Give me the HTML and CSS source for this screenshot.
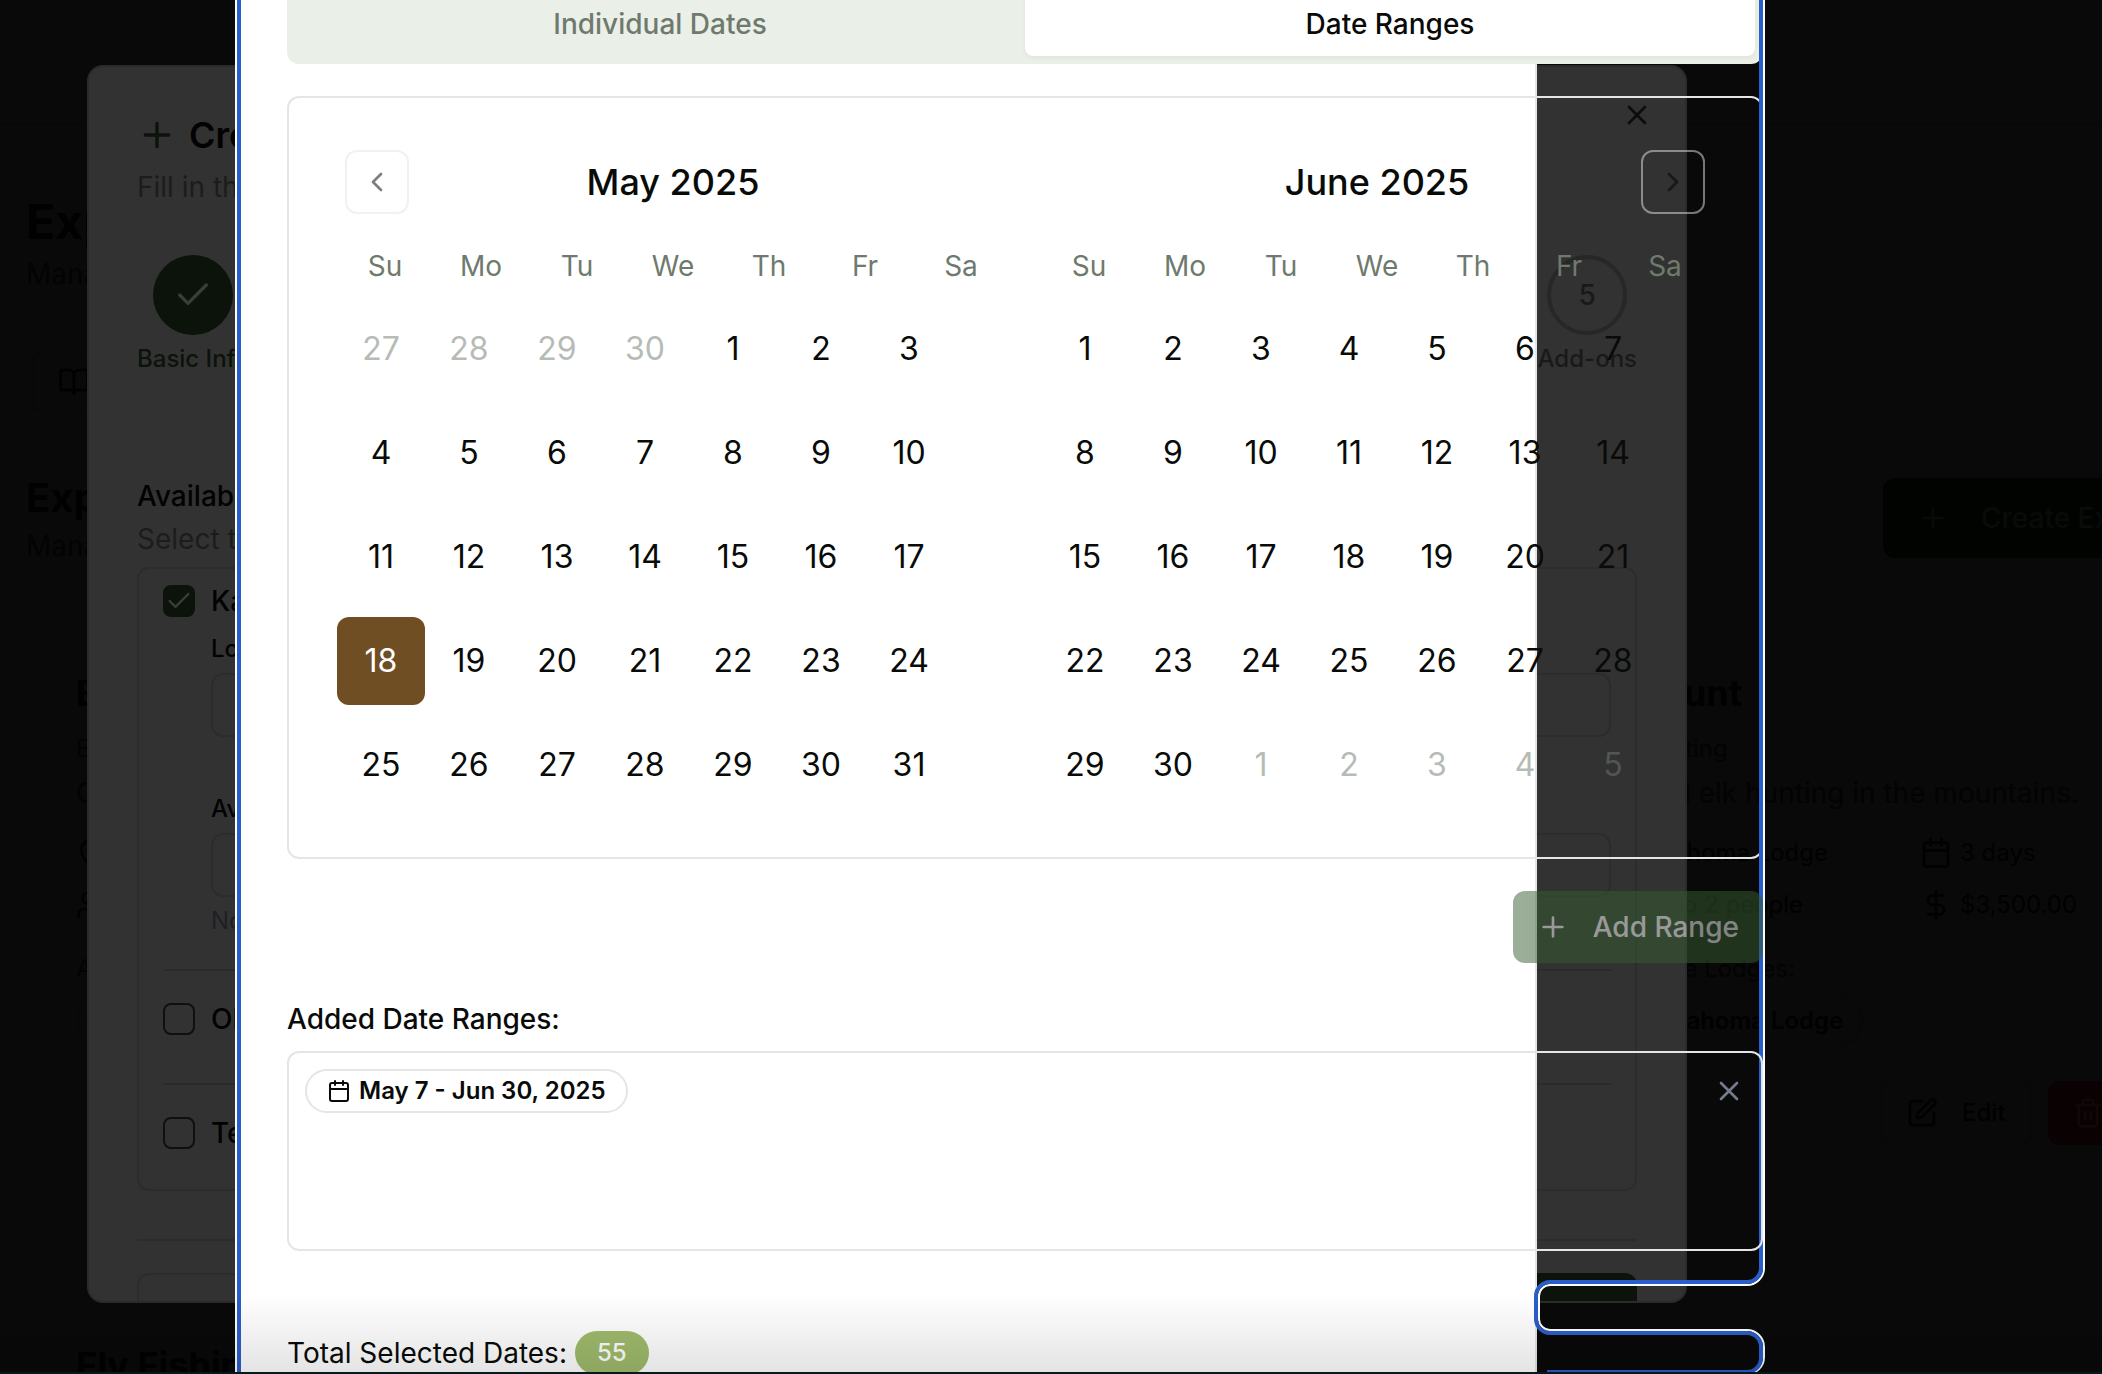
FILE: index.html
```html
<!DOCTYPE html>
<html lang="en">
<head>
<meta charset="utf-8">
<title>Experiences</title>
<link rel="stylesheet" href="styles.css">
</head>
<body>
<svg width="0" height="0" class="defs" aria-hidden="true">
  <symbol id="plus" viewBox="0 0 24 24"><path d="M5 12h14M12 5v14"/></symbol>
  <symbol id="x" viewBox="0 0 24 24"><path d="M18 6 6 18M6 6l12 12"/></symbol>
  <symbol id="check" viewBox="0 0 24 24"><path d="M20 6 9 17l-5-5"/></symbol>
  <symbol id="left" viewBox="0 0 24 24"><path d="m15 18-6-6 6-6"/></symbol>
  <symbol id="right" viewBox="0 0 24 24"><path d="m9 18 6-6-6-6"/></symbol>
  <symbol id="calendar" viewBox="0 0 24 24"><path d="M8 2v4M16 2v4M3 10h18"/><rect width="18" height="18" x="3" y="4" rx="2"/></symbol>
  <symbol id="book" viewBox="0 0 24 24"><path d="M12 7v14"/><path d="M3 18a1 1 0 0 1-1-1V4a1 1 0 0 1 1-1h5a4 4 0 0 1 4 4 4 4 0 0 1 4-4h5a1 1 0 0 1 1 1v13a1 1 0 0 1-1 1h-6a3 3 0 0 0-3 3 3 3 0 0 0-3-3z"/></symbol>
  <symbol id="pin" viewBox="0 0 24 24"><path d="M20 10c0 5-5.500 10.200-7.400 11.800a1 1 0 0 1-1.200 0C9.500 20.200 4 15 4 10a8 8 0 0 1 16 0"/><circle cx="12" cy="10" r="3"/></symbol>
  <symbol id="users" viewBox="0 0 24 24"><path d="M16 21v-2a4 4 0 0 0-4-4H6a4 4 0 0 0-4 4v2M22 21v-2a4 4 0 0 0-3-3.870M16 3.130a4 4 0 0 1 0 7.750"/><circle cx="9" cy="7" r="4"/></symbol>
  <symbol id="dollar" viewBox="0 0 24 24"><path d="M12 2v20M17 5H9.500a3.500 3.500 0 0 0 0 7h5a3.500 3.500 0 0 1 0 7H6"/></symbol>
  <symbol id="edit" viewBox="0 0 24 24"><path d="M12 3H5a2 2 0 0 0-2 2v14a2 2 0 0 0 2 2h14a2 2 0 0 0 2-2v-7"/><path d="M18.375 2.625a1 1 0 0 1 3 3l-9.013 9.014a2 2 0 0 1-.853.505l-2.873.84a.5.5 0 0 1-.620-.620l.840-2.873a2 2 0 0 1 .506-.852z"/></symbol>
  <symbol id="trash" viewBox="0 0 24 24"><path d="M3 6h18M19 6v14c0 1-1 2-2 2H7c-1 0-2-1-2-2V6M8 6V4c0-1 1-2 2-2h4c1 0 2 1 2 2v2M10 11v6M14 11v6"/></symbol>
</svg>

<div class="screen">
  <main class="page">
    <div class="topbar"></div>
    <header class="intro">
      <h1>Experiences</h1>
      <p>Manage</p>
    </header>
    <nav class="page-tabs"><button type="button" aria-label="Experiences"><svg class="icon"><use href="#book"/></svg></button></nav>
    <div class="section-head">
      <div>
        <h2>Experiences</h2>
        <p>Manage</p>
      </div>
      <button type="button" class="create"><svg class="icon"><use href="#plus"/></svg>Create Experience</button>
    </div>
    <div class="offers">
      <article class="offer">
        <h3>Elk</h3>
        <p class="kind">Big</p>
        <p class="about">Guided</p>
        <div class="meta">
          <span><svg class="icon"><use href="#pin"/></svg></span>
          <span></span>
          <span><svg class="icon"><use href="#users"/></svg></span>
        </div>
        <p class="kind lodges">Available</p>
        <span class="lodge">Lodge</span>
      </article>
      <article class="offer second">
        <h3>Elk Hunt</h3>
        <p class="kind">Big Hunting</p>
        <p class="about">Guided elk hunting in the mountains.</p>
        <div class="meta">
          <span><svg class="icon"><use href="#pin"/></svg>Oklahoma Lodge</span>
          <span><svg class="icon"><use href="#calendar"/></svg>3 days</span>
          <span><svg class="icon"><use href="#users"/></svg>Up to 2 people</span>
          <span><svg class="icon"><use href="#dollar"/></svg>$3,500.00</span>
        </div>
        <p class="kind lodges">Available Lodges:</p>
        <span class="lodge">Oklahoma Lodge</span>
        <div class="actions">
          <button type="button"><svg class="icon"><use href="#edit"/></svg>Edit</button>
          <button type="button" class="remove" aria-label="Delete"><svg class="icon"><use href="#trash"/></svg></button>
        </div>
      </article>
      <article class="offer"><h3>Fly Fishing</h3></article>
    </div>
  </main>

  <section class="dialog" role="dialog" aria-label="Create">
    <div class="dialog-head">
      <div>
        <h2><svg class="icon"><use href="#plus"/></svg>Create</h2>
        <p>Fill in the</p>
      </div>
      <button type="button" class="close" aria-label="Close"><svg class="icon"><use href="#x"/></svg></button>
    </div>
    <ol class="steps">
      <li class="done"><span class="dot"><svg class="icon"><use href="#check"/></svg></span>Basic Info</li>
      <li><span class="dot">5</span>Add-ons</li>
    </ol>
    <h3>Available</h3>
    <p>Select the</p>
    <div class="choices">
      <label class="choice"><input type="checkbox" checked>Ka</label>
      <div class="fields">
        <label for="lodge-name">Lodge</label>
        <input type="text" id="lodge-name">
        <label for="lodge-dates" class="spaced">Available</label>
        <input type="text" id="lodge-dates">
        <p>No</p>
      </div>
      <hr>
      <label class="choice"><input type="checkbox">Oklahoma</label>
      <hr class="late">
      <label class="choice"><input type="checkbox">Texas</label>
    </div>
    <hr class="foot-line">
    <footer>
      <button type="button" aria-label="Back"></button>
      <button type="button" class="next" aria-label="Next"></button>
    </footer>
  </section>

  <section class="popover" aria-label="Select dates">
    <div class="tabs" role="tablist">
      <button type="button" role="tab" aria-selected="false">Individual Dates</button>
      <button type="button" role="tab" aria-selected="true">Date Ranges</button>
    </div>
    <div class="calendar">
      <div class="month">
        <div class="caption">
          <button type="button" class="nav" aria-label="Previous month"><svg class="icon"><use href="#left"/></svg></button>
          <h4>May 2025</h4>
        </div>
        <table>
          <thead><tr><th>Su</th><th>Mo</th><th>Tu</th><th>We</th><th>Th</th><th>Fr</th><th>Sa</th></tr></thead>
          <tbody>
            <tr><td class="out"><button>27</button></td><td class="out"><button>28</button></td><td class="out"><button>29</button></td><td class="out"><button>30</button></td><td><button>1</button></td><td><button>2</button></td><td><button>3</button></td></tr>
            <tr><td><button>4</button></td><td><button>5</button></td><td><button>6</button></td><td><button>7</button></td><td><button>8</button></td><td><button>9</button></td><td><button>10</button></td></tr>
            <tr><td><button>11</button></td><td><button>12</button></td><td><button>13</button></td><td><button>14</button></td><td><button>15</button></td><td><button>16</button></td><td><button>17</button></td></tr>
            <tr><td class="today"><button>18</button></td><td><button>19</button></td><td><button>20</button></td><td><button>21</button></td><td><button>22</button></td><td><button>23</button></td><td><button>24</button></td></tr>
            <tr><td><button>25</button></td><td><button>26</button></td><td><button>27</button></td><td><button>28</button></td><td><button>29</button></td><td><button>30</button></td><td><button>31</button></td></tr>
          </tbody>
        </table>
      </div>
      <div class="month">
        <div class="caption">
          <h4>June 2025</h4>
          <button type="button" class="nav" aria-label="Next month"><svg class="icon"><use href="#right"/></svg></button>
        </div>
        <table>
          <thead><tr><th>Su</th><th>Mo</th><th>Tu</th><th>We</th><th>Th</th><th>Fr</th><th>Sa</th></tr></thead>
          <tbody>
            <tr><td><button>1</button></td><td><button>2</button></td><td><button>3</button></td><td><button>4</button></td><td><button>5</button></td><td><button>6</button></td><td><button>7</button></td></tr>
            <tr><td><button>8</button></td><td><button>9</button></td><td><button>10</button></td><td><button>11</button></td><td><button>12</button></td><td><button>13</button></td><td><button>14</button></td></tr>
            <tr><td><button>15</button></td><td><button>16</button></td><td><button>17</button></td><td><button>18</button></td><td><button>19</button></td><td><button>20</button></td><td><button>21</button></td></tr>
            <tr><td><button>22</button></td><td><button>23</button></td><td><button>24</button></td><td><button>25</button></td><td><button>26</button></td><td><button>27</button></td><td><button>28</button></td></tr>
            <tr><td><button>29</button></td><td><button>30</button></td><td class="out"><button>1</button></td><td class="out"><button>2</button></td><td class="out"><button>3</button></td><td class="out"><button>4</button></td><td class="out"><button>5</button></td></tr>
          </tbody>
        </table>
      </div>
    </div>
    <!-- Focus outline around the panel and everything that overflows it -->
    <svg class="ring" viewBox="0 0 1530 1374" width="1530" height="1374" aria-hidden="true">
      <path class="halo" d="M1 0V1374M1529 0V1268a17 17 0 0 1-17 17H1315a11 11 0 0 0-11 11V1319a11 11 0 0 0 11 11H1512a17 17 0 0 1 17 17V1357a17 17 0 0 1-17 17"/>
      <path class="line" d="M4 0V1374M1526 0V1268a14 14 0 0 1-14 14H1315a14 14 0 0 0-14 14V1319a14 14 0 0 0 14 14H1512a14 14 0 0 1 14 14V1358a14 14 0 0 1-14 14H1312"/>
    </svg>
    <button type="button" class="add" disabled><svg class="icon"><use href="#plus"/></svg>Add Range</button>
    <h5>Added Date Ranges:</h5>
    <div class="ranges">
      <span class="range"><svg class="icon"><use href="#calendar"/></svg>May 7 - Jun 30, 2025</span>
      <button type="button" class="clear" aria-label="Remove range"><svg class="icon"><use href="#x"/></svg></button>
    </div>
    <p class="total">Total Selected Dates: <span class="count">55</span></p>
  </section>
  <div class="shade"></div>
  <div class="edge"></div>
</div>
</body>
</html>
```

FILE: styles.css
```css
* { box-sizing: border-box; }
body, h1, h2, h3, h4, h5, p, ol { margin: 0; padding: 0; }
body { font-family: Inter, "Liberation Sans", sans-serif; font-size: 28px; line-height: 40px; background: #090909; }
button { font: inherit; color: inherit; background: none; border: 0; padding: 0; margin: 0; }
.defs { position: absolute; }
.icon { width: 32px; height: 32px; flex: none; fill: none; stroke: currentColor; stroke-width: 2; stroke-linecap: round; stroke-linejoin: round; }
.screen { position: relative; height: 100vh; overflow: hidden; }

/* Dimmed page */
.page { padding-left: 26px; color: #000100; }
.page p { color: #020302; }
.topbar { height: 125px; margin-left: -26px; border-bottom: 1px solid #060606; }
.intro { padding-top: 65px; }
.intro h1 { font-size: 48px; line-height: 64px; font-weight: 700; }
.page-tabs { display: flex; margin: 58px 0 0 6px; }
.page-tabs button { display: flex; width: 480px; padding: 12px 24px; border: 2px solid #080808; border-radius: 8px; }
.section-head { display: flex; justify-content: space-between; align-items: center; margin: 58px -160px 0 0; }
.section-head h2 { font-size: 40px; line-height: 56px; font-weight: 700; }
.create { display: flex; align-items: center; gap: 32px; height: 80px; padding: 0 34px; border-radius: 12px; background: #010301; color: #090b09; font-weight: 500; }
.offers { display: grid; grid-template-columns: 1480px 1480px; gap: 100px 40px; margin-top: 55px; }
.offer { padding: 48px 50px; border-radius: 16px; }
.offer h3 { font-size: 36px; line-height: 48px; font-weight: 700; }
.offer .kind { font-size: 24px; line-height: 32px; margin-top: 16px; }
.offer .about { margin-top: 8px; }
.meta { display: grid; grid-template-columns: 292px 292px; gap: 20px 32px; margin-top: 24px; font-size: 24px; line-height: 32px; height: 84px; }
.meta span { display: flex; gap: 8px; }
.offer .lodges { margin-top: 32px; }
.lodge { display: inline-block; padding: 8px 18px; margin-top: 10px; border: 2px solid #080808; border-radius: 26px; font-size: 24px; line-height: 32px; font-weight: 600; }
.second .lodge { margin-left: 32px; }
.actions { display: flex; gap: 16px; margin: 34px 0 0 284px; }
.actions button { display: flex; align-items: center; gap: 24px; height: 64px; padding: 0 24px; border: 2px solid #080808; border-radius: 12px; font-size: 24px; font-weight: 500; }
.actions .remove { border: 0; background: #0a0202; color: #100707; }

/* First dialog */
.dialog { position: absolute; left: 87px; right: 415px; top: 65px; bottom: 71px; overflow: hidden; padding: 48px; border: 2px solid #2b2b2b; border-radius: 16px; background: #323232; color: #020202; }
.dialog p { color: #1b1d1b; }
.dialog-head { display: flex; justify-content: space-between; align-items: flex-start; }
.dialog h2 { display: flex; align-items: center; gap: 12px; font-size: 36px; font-weight: 600; margin-bottom: 12px; }
.dialog h2 .icon { width: 40px; height: 40px; color: #0b130a; }
.close { display: flex; margin: -16px -16px 0 0; color: #0c0c0c; }
.steps { display: flex; justify-content: space-between; margin: 48px 0 101px; list-style: none; font-size: 24px; line-height: 32px; font-weight: 500; color: #181a18; }
.steps li { display: flex; flex-direction: column; align-items: center; gap: 8px; }
.dot { display: flex; align-items: center; justify-content: center; width: 80px; height: 80px; border: 4px solid #282726; border-radius: 50%; font-size: 28px; }
.dot .icon { width: 40px; height: 40px; color: #3b3d3b; }
.steps .done { color: #0b130a; }
.done .dot { border: 0; background: #0b130a; }
.dialog h3 { font-size: 28px; font-weight: 500; margin-bottom: 3px; }
.choices { margin-top: 8px; padding: 16px 24px 40px; border: 2px solid #2c2c2c; border-radius: 12px; }
.choice { display: flex; align-items: center; gap: 16px; line-height: 32px; font-weight: 500; }
.choice input { appearance: none; width: 32px; height: 32px; margin: 0; border: 2px solid #0b130a; border-radius: 8px; }
.choice input:checked { background: #0b130a url("data:image/svg+xml,%3Csvg xmlns='http://www.w3.org/2000/svg' viewBox='0 0 24 24' fill='none' stroke='%233b3d3b' stroke-width='2' stroke-linecap='round' stroke-linejoin='round'%3E%3Cpath d='M20 6 9 17l-5-5'/%3E%3C/svg%3E") center / 28px no-repeat; }
.fields { display: flex; flex-direction: column; gap: 8px; margin: 16px 0 32px 48px; font-size: 24px; line-height: 32px; }
.fields label { font-weight: 500; }
.fields .spaced { margin-top: 48px; }
.fields input { height: 64px; border: 2px solid #2c2c2c; border-radius: 12px; background: none; }
.dialog .fields p { color: #1e2024; }
.dialog hr { height: 2px; margin: 0 0 32px; border: 0; background: #2b2b2b; }
.dialog .late { margin-top: 48px; }
.dialog .foot-line { margin-top: 48px; }
.dialog footer { display: flex; justify-content: space-between; }
.dialog footer button { width: 200px; height: 72px; border: 2px solid #2c2c2c; border-radius: 12px; }
.dialog footer .next { border: 0; background: #0b130a; }

/* Date popover, scrolled a little past its top */
.popover { position: absolute; z-index: 1; left: 235px; top: -16px; height: 1400px; padding-left: 52px; color: #090b09; }
.popover::before { content: ""; position: absolute; inset: 0 auto 0 0; width: 1300px; background: #fff; border-right: 2px solid #e5e5e5; z-index: -1; }
.ring { position: absolute; left: 0; top: 16px; fill: none; }
.ring .halo { stroke: #fff; stroke-width: 2; }
.ring .line { stroke: #2a5ec8; stroke-width: 4; }
.tabs { display: grid; grid-template-columns: 1fr 1fr; height: 80px; padding: 8px; border-radius: 12px; background: #eaefe8; color: #6f7a6e; }
.tabs button { font-weight: 500; border-radius: 8px; }
.tabs [aria-selected="true"] { background: #fff; color: #090b09; box-shadow: 0 2px 4px #0000000d; }
.calendar { display: flex; gap: 32px; margin-top: 32px; padding: 48px; border: 2px solid #e5e5e5; border-radius: 12px; }
.caption { display: grid; grid-template-columns: 64px 1fr 64px; align-items: center; padding: 4px 8px 0; margin-bottom: 32px; }
.caption h4 { grid-column: 2; font-size: 36px; font-weight: 500; text-align: center; }
.nav { display: flex; align-items: center; justify-content: center; height: 64px; border: 2px solid #e5e5e5; border-radius: 12px; opacity: .5; }
.nav .icon { stroke: #000; }
table, thead, tbody { display: block; }
thead { margin-bottom: 19px; }
tr { display: flex; }
th { width: 96px; padding: 0; font-weight: 400; color: #6f7a6e; }
tr + tr { margin-top: 16px; }
td { padding: 0; }
td button { display: block; width: 88px; height: 88px; border-radius: 12px; font-size: 32px; }
.out { color: #6f7a6e; opacity: .5; }
.today button { background: #704e24; color: #fff; }
.add, .ranges { position: relative; }
.add { display: flex; align-items: center; gap: 24px; height: 72px; margin: 32px 0 32px auto; padding: 0 24px; border-radius: 12px; background: #375d30; color: #fff; font-weight: 500; opacity: .5; }
h5 { font-size: 28px; line-height: 48px; font-weight: 500; }
.ranges { display: flex; justify-content: space-between; align-items: flex-start; height: 200px; margin-top: 8px; padding: 16px; border: 2px solid #e5e5e5; border-radius: 12px; }
.range { display: flex; align-items: center; gap: 8px; height: 44px; padding: 0 20px; border: 2px solid #e5e5e5; border-radius: 22px; font-size: 24px; font-weight: 600; }
.range .icon { width: 24px; height: 24px; }
.clear { display: flex; padding: 6px 0; color: #757a8c; }
.total { display: flex; align-items: center; gap: 8px; margin-top: 80px; line-height: 44px; }
.count { padding: 0 22px; border-radius: 22px; background: #9fbb6c; color: #fff; font-size: 24px; font-weight: 500; }

/* Dock shadow and the strip of desktop under the window */
.shade { position: absolute; z-index: 2; inset: auto 0 0; height: 80px; background: linear-gradient(#0000, #0000001c); }
.edge { position: absolute; z-index: 2; inset: auto 0 0; height: 2px; background: #081820; }
```
